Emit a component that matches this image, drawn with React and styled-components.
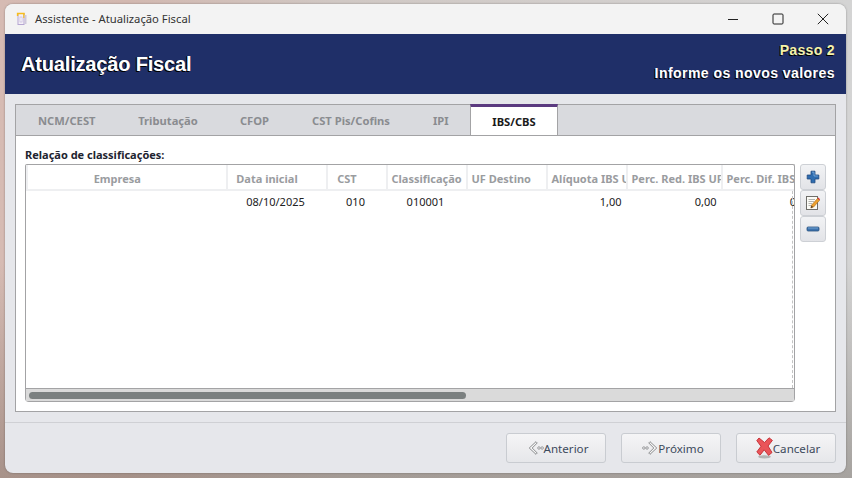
import React from "react";
import styled, { createGlobalStyle } from "styled-components";

const Global = createGlobalStyle`
  html, body { margin: 0; padding: 0; width: 852px; height: 478px; overflow: hidden; }
  * { box-sizing: border-box; }
`;

const Desktop = styled.div`
  width: 852px;
  height: 478px;
  padding: 4px 6px 5px 5px;
  background:
    linear-gradient(180deg, rgba(255, 255, 255, 0) 55%, rgba(80, 70, 60, 0.35) 100%),
    linear-gradient(90deg, #d6bbb3 0%, #d2b8b0 15%, #d0c8c4 40%, #d4d4d4 100%);
  font-family: "Noto Sans", "Open Sans", sans-serif;
`;

const Window = styled.div`
  width: 841px;
  height: 469px;
  display: flex;
  flex-direction: column;
  background: #e6e7eb;
  border-radius: 8px;
  overflow: hidden;
  box-shadow: 0 0 2px rgba(60, 60, 60, 0.5);
`;

const TitleBar = styled.div`
  height: 30px;
  flex: none;
  display: flex;
  align-items: center;
  background: #f3f3f3;
  padding: 0 0 1px 10px;
`;

const TitleText = styled.span`
  margin-left: 7px;
  font-family: "Noto Sans", sans-serif;
  font-size: 11.25px;
  color: #333;
`;

const WindowControls = styled.div`
  margin-left: auto;
  display: flex;
  align-items: center;
  gap: 33px;
  padding-right: 17px;
`;

const Banner = styled.header`
  height: 60px;
  flex: none;
  display: flex;
  align-items: center;
  justify-content: space-between;
  background: #1f2f68;
  padding: 0 11px 0 16px;
  font-family: "Liberation Sans", Arial, sans-serif;
  font-weight: 700;
`;

const BannerTitle = styled.h1`
  margin: 0;
  font-size: 20px;
  line-height: 24px;
  color: #fff;
  letter-spacing: -0.17px;
  text-shadow: -1px 1px 0 #000, -1px 0 0 #000;
`;

const BannerSteps = styled.div`
  display: flex;
  flex-direction: column;
  align-items: flex-end;
  gap: 6px;
  margin-bottom: 4px;
  text-shadow: -1px 1px 0 #000;
`;

const StepNumber = styled.span`
  font-size: 14px;
  line-height: 17px;
  letter-spacing: 0.35px;
  color: #f6f3a8;
`;

const StepText = styled.span`
  font-size: 14px;
  line-height: 17px;
  letter-spacing: 0.45px;
  color: #fff;
`;

const Body = styled.main`
  height: 329px;
  flex: none;
  padding: 10px;
  border-bottom: 1px solid #cfd0d4;
`;

const TabPanel = styled.section`
  height: 100%;
  display: flex;
  flex-direction: column;
  border: 1px solid #a3a3a5;
  background: #fff;
`;

const TabBar = styled.nav`
  height: 31px;
  flex: none;
  display: flex;
  background: #d9dade;
  border-bottom: 1px solid #a3a3a5;
`;

const Tab = styled.div`
  width: ${(p) => p.$width}px;
  flex: none;
  height: ${(p) => (p.$active ? "31px" : "30px")};
  display: flex;
  align-items: center;
  justify-content: center;
  font-size: 11.2px;
  font-weight: 700;
  color: ${(p) => (p.$active ? "#1a1a1a" : "#8a8c90")};
  background: ${(p) => (p.$active ? "#fff" : "transparent")};
  border-top: ${(p) => (p.$active ? "3px solid #5b3a80" : "0")};
  border-left: ${(p) => (p.$active ? "1px solid #a3a3a5" : "0")};
  border-right: ${(p) => (p.$active ? "1px solid #a3a3a5" : "0")};
  margin-top: ${(p) => (p.$active ? "-1px" : "0")};
`;

const PanelBody = styled.div`
  flex: 1;
  min-height: 0;
  display: flex;
  flex-direction: column;
  padding: 12px 9px 9px 9px;
`;

const SectionLabel = styled.label`
  height: 16px;
  flex: none;
  font-size: 11px;
  line-height: 14px;
  font-weight: 700;
  color: #1e2430;
`;

const TableRow = styled.div`
  flex: 1;
  min-height: 0;
  display: flex;
  gap: 5px;
`;

const Table = styled.div`
  width: 770px;
  flex: none;
  display: flex;
  flex-direction: column;
  border: 1px solid #a3a3a5;
  border-bottom: 0;
  border-radius: 2px 2px 4px 4px;
  overflow: hidden;
  position: relative;
  background: #fff;
`;

const Viewport = styled.div`
  flex: 1;
  min-height: 0;
  overflow: hidden;
  font-size: 11px;
`;

const Grid = styled.div`
  display: grid;
  width: 800px;
  grid-template-columns: 199.5px 100px 60px 80px 80px 80px 95px 95px;
`;

const HeadCell = styled.div`
  height: 26px;
  padding: 0 23px 0 4px;
  line-height: 27px;
  font-weight: 700;
  color: #9a9c9f;
  text-align: center;
  white-space: nowrap;
  overflow: hidden;
  border-bottom: 2px solid #eeeff1;
  border-left: 2px solid #eeeff1;
`;

const Cell = styled.div`
  height: 22px;
  padding: 0 4px;
  line-height: 21px;
  color: #222;
  white-space: nowrap;
  text-align: ${(p) => p.$align || "center"};
`;

const DashedEdge = styled.div`
  position: absolute;
  top: 26px;
  right: 1px;
  bottom: 14px;
  border-right: 1px dashed #c4c4c4;
`;

const ScrollTrack = styled.div`
  height: 14px;
  flex: none;
  padding: 3px;
  background: #dadada;
  border-top: 1px solid #a3a3a5;
  border-bottom: 1px solid #a3a3a5;
`;

const ScrollThumb = styled.div`
  width: 437px;
  height: 7px;
  border-radius: 4px;
  background: #7b8080;
`;

const SideButtons = styled.div`
  display: flex;
  flex-direction: column;
`;

const IconButton = styled.button`
  width: 26px;
  height: 26px;
  padding: 0;
  display: flex;
  align-items: center;
  justify-content: center;
  background: linear-gradient(#f2f3f5, #e2e3e7);
  border: 1px solid #cdd0d5;
  border-radius: 3px;
`;

const Footer = styled.footer`
  flex: 1;
  display: flex;
  justify-content: flex-end;
  align-items: flex-start;
  gap: 15px;
  padding: 10px 10px 0 0;
`;

const FooterButton = styled.button`
  width: 100px;
  height: 30px;
  padding: 0 0 0 4px;
  display: flex;
  align-items: center;
  justify-content: center;
  font-family: "Noto Sans", sans-serif;
  font-size: 11.6px;
  color: #3d4a5c;
  background: linear-gradient(#f5f5f6, #e6e7ea);
  border: 1px solid #c9ccd1;
  border-radius: 3px;
`;

const AppIcon = () => (
  <svg width="13" height="14" viewBox="0 0 13 14">
    <rect x="3" y="1.5" width="6" height="11" fill="#f4f0f6" stroke="#b5a6d2" />
    <path d="M2.6 4V1.5H9V6" fill="none" stroke="#f7bd1c" strokeWidth="1.5" />
    <rect x="9.5" y="3" width="2" height="9" fill="#cfc9dc" />
    <rect x="5" y="5" width="2" height="5" fill="#fff" stroke="#c4b8da" strokeWidth="0.7" />
  </svg>
);

const MinIcon = () => (
  <svg width="12" height="12" viewBox="0 0 12 12">
    <path d="M1 6.5H11" stroke="#222" strokeWidth="1" />
  </svg>
);
const MaxIcon = () => (
  <svg width="12" height="12" viewBox="0 0 12 12">
    <rect x="1" y="1" width="10" height="10" rx="1" fill="none" stroke="#222" />
  </svg>
);
const CloseIcon = () => (
  <svg width="12" height="12" viewBox="0 0 12 12">
    <path d="M0.8 0.8L11.2 11.2M11.2 0.8L0.8 11.2" stroke="#222" strokeWidth="1" />
  </svg>
);

const PlusIcon = () => (
  <svg width="14" height="14" viewBox="0 0 14 14">
    <path d="M5 1.2H9V5H12.8V9H9V12.8H5V9H1.2V5H5Z" fill="#2f6db0" stroke="#1f4a80" strokeWidth="0.8" strokeLinejoin="round" />
    <path d="M6 2.2H8V6H11.8" fill="none" stroke="#7fb0df" strokeWidth="0.8" />
  </svg>
);
const MinusIcon = () => (
  <svg width="14" height="14" viewBox="0 0 14 14">
    <rect x="1" y="5" width="12" height="4" rx="1" fill="#3d73ae" stroke="#28527f" strokeWidth="0.8" />
    <path d="M2 6H12" stroke="#86b2de" strokeWidth="0.8" />
  </svg>
);
const EditIcon = () => (
  <svg width="16" height="16" viewBox="0 0 16 16">
    <rect x="1.5" y="1.5" width="11" height="13" fill="#fbfbf6" stroke="#6e6e6a" />
    <path d="M3.5 4.5H10M3.5 6.5H9M3.5 8.5H7M3.5 10.5H6" stroke="#b4b4b0" />
    <path d="M5.8 13L6.6 10L12.5 3.5L14.5 5.3L8.6 12Z" fill="#eda02f" stroke="#a66a14" strokeWidth="0.6" />
    <path d="M12.5 3.5L13.4 2.5L15 4.2L14.5 5.3Z" fill="#d8323a" />
    <path d="M5.8 13L6.6 10.6L8 12Z" fill="#40322a" />
  </svg>
);

const PrevIcon = () => (
  <svg width="16" height="16" viewBox="0 0 19 18">
    <path d="M9.5 1.5L1.5 9L9.5 16.5L11 15L5 9L11 3Z" fill="#f6f6f6" stroke="#77797c" strokeWidth="1" strokeLinejoin="round" />
    <circle cx="13" cy="9" r="1.5" fill="none" stroke="#85878a" strokeWidth="0.9" />
    <circle cx="16.8" cy="9" r="1.5" fill="none" stroke="#85878a" strokeWidth="0.9" />
  </svg>
);
const NextIcon = () => (
  <svg width="16" height="16" viewBox="0 0 19 18">
    <path d="M9.5 1.5L17.5 9L9.5 16.5L8 15L14 9L8 3Z" fill="#f6f6f6" stroke="#77797c" strokeWidth="1" strokeLinejoin="round" />
    <circle cx="6" cy="9" r="1.5" fill="none" stroke="#85878a" strokeWidth="0.9" />
    <circle cx="2.2" cy="9" r="1.5" fill="none" stroke="#85878a" strokeWidth="0.9" />
  </svg>
);
const CancelIcon = () => (
  <svg width="17" height="22" viewBox="0 0 17 22">
    <ellipse cx="8.5" cy="19.8" rx="6.5" ry="1.6" fill="#b4b4b4" />
    <path d="M3 1L8.5 5.5L13 0.8L16.4 3.4L12 9L16 15.5L12.6 18.4L8.2 12.8L4 18.2L0.8 15L5 9.3L0.8 3.6Z" fill="#ea5459" stroke="#c6343a" strokeWidth="1" strokeLinejoin="round" />
  </svg>
);

const tabs = [
  ["NCM/CEST", 101.5],
  ["Tributação", 101],
  ["CFOP", 72],
  ["CST Pis/Cofins", 121],
  ["IPI", 58.5],
  ["IBS/CBS", 88],
];
const heads = ["Empresa", "Data inicial", "CST", "Classificação", "UF Destino", "Alíquota IBS UF", "Perc. Red. IBS UF", "Perc. Dif. IBS UF"];
const row = [
  ["", "center"],
  ["08/10/2025", "center"],
  ["010", "center"],
  ["010001", "center"],
  ["", "center"],
  ["1,00", "right"],
  ["0,00", "right"],
  ["0,00", "right"],
];

export default function App() {
  return (
    <Desktop>
      <Global />
      <Window>
        <TitleBar>
          <AppIcon />
          <TitleText>Assistente - Atualização Fiscal</TitleText>
          <WindowControls>
            <MinIcon />
            <MaxIcon />
            <CloseIcon />
          </WindowControls>
        </TitleBar>
        <Banner>
          <BannerTitle>Atualização Fiscal</BannerTitle>
          <BannerSteps>
            <StepNumber>Passo 2</StepNumber>
            <StepText>Informe os novos valores</StepText>
          </BannerSteps>
        </Banner>
        <Body>
          <TabPanel>
            <TabBar>
              {tabs.map(([t, w]) => (
                <Tab key={t} $width={w} $active={t === "IBS/CBS"}>{t}</Tab>
              ))}
            </TabBar>
            <PanelBody>
              <SectionLabel>Relação de classificações:</SectionLabel>
              <TableRow>
                <Table>
                  <Viewport>
                    <Grid>
                      {heads.map((h) => (
                        <HeadCell key={h}>{h}</HeadCell>
                      ))}
                      {row.map(([v, a], i) => (
                        <Cell key={i} $align={a}>{v}</Cell>
                      ))}
                    </Grid>
                  </Viewport>
                  <DashedEdge />
                  <ScrollTrack>
                    <ScrollThumb />
                  </ScrollTrack>
                </Table>
                <SideButtons>
                  <IconButton aria-label="Adicionar"><PlusIcon /></IconButton>
                  <IconButton aria-label="Editar"><EditIcon /></IconButton>
                  <IconButton aria-label="Remover"><MinusIcon /></IconButton>
                </SideButtons>
              </TableRow>
            </PanelBody>
          </TabPanel>
        </Body>
        <Footer>
          <FooterButton><PrevIcon />Anterior</FooterButton>
          <FooterButton><NextIcon />Próximo</FooterButton>
          <FooterButton><CancelIcon />Cancelar</FooterButton>
        </Footer>
      </Window>
    </Desktop>
  );
}
